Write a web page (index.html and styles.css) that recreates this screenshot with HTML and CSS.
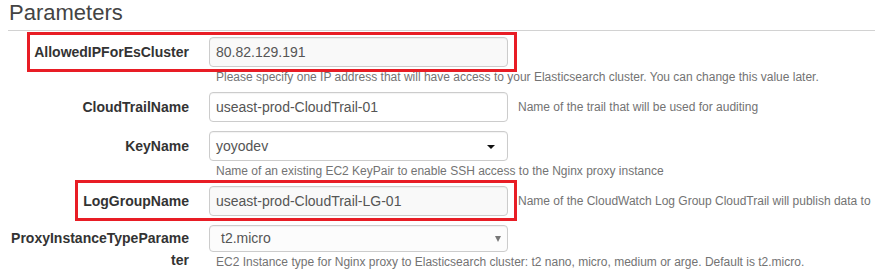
FILE: index.html
```html
<!DOCTYPE html>
<html lang="en">
<head>
    <meta charset="UTF-8">
    <meta name="viewport" content="width=device-width, initial-scale=1.0">
    <title>Parameters</title>
    <link rel="stylesheet" href="styles.css">
</head>
<body>
<div id="page">
    <h2 class="title">Parameters</h2>

    <div class="field">
        <label class="field-label">AllowedIPForEsCluster</label>
        <div class="field-control">
            <input class="text-input shaded" type="text" value="80.82.129.191">
            <div class="help">Please specify one IP address that will have access to your Elasticsearch cluster. You can change this value later.</div>
        </div>
        <div class="highlight box-ip"></div>
    </div>

    <div class="field">
        <label class="field-label">CloudTrailName</label>
        <div class="field-control inline">
            <input class="text-input" type="text" value="useast-prod-CloudTrail-01">
            <div class="help-inline">Name of the trail that will be used for auditing</div>
        </div>
    </div>

    <div class="field">
        <label class="field-label">KeyName</label>
        <div class="field-control">
            <div class="select dark-caret">yoyodev</div>
            <div class="help">Name of an existing EC2 KeyPair to enable SSH access to the Nginx proxy instance</div>
        </div>
    </div>

    <div class="field">
        <label class="field-label">LogGroupName</label>
        <div class="field-control inline">
            <input class="text-input shaded" type="text" value="useast-prod-CloudTrail-LG-01">
            <div class="help-inline">Name of the CloudWatch Log Group CloudTrail will publish data to</div>
        </div>
        <div class="highlight box-log"></div>
    </div>

    <div class="field">
        <label class="field-label wrap">ProxyInstanceTypeParameter</label>
        <div class="field-control">
            <div class="select grey-caret short">t2.micro</div>
            <div class="help">EC2 Instance type for Nginx proxy to Elasticsearch cluster: t2 nano, micro, medium or arge. Default is t2.micro.</div>
        </div>
    </div>
</div>
</body>
</html>
```
FILE: styles.css
```css
body {
    margin: 0;
    padding: 0;
    background-color: #fff;
    font-family: "Liberation Sans", Arial, sans-serif;
    color: #333;
    overflow: hidden;
}

#page {
    padding-left: 8px;
}

.title {
    margin: 0;
    padding: 0 0 5px 1px;
    font-size: 22px;
    font-weight: normal;
    line-height: 25px;
    color: #444;
    border-bottom: 1px solid #d2d2d2;
}

.field {
    position: relative;
    display: flex;
    align-items: flex-start;
    margin-bottom: 9px;
}

.field:first-of-type {
    margin-top: 6px;
}

.field-label {
    width: 181px;
    flex-shrink: 0;
    padding-top: 4px;
    text-align: right;
    font-size: 14px;
    font-weight: bold;
    line-height: 22px;
    color: #333;
}

.field-label.wrap {
    word-break: break-all;
    padding-top: 2px;
}

.field-control {
    margin-left: 20px;
}

.field-control.inline {
    display: flex;
    align-items: center;
}

.text-input,
.select {
    box-sizing: border-box;
    width: 299px;
    height: 30px;
    padding: 0 6px;
    border: 1px solid #ccc;
    border-radius: 4px;
    background-color: #fff;
    font-family: "Liberation Sans", Arial, sans-serif;
    font-size: 14px;
    color: #555;
    box-shadow: inset 0 1px 1px rgba(0, 0, 0, 0.05);
}

.text-input.shaded {
    background-color: #f9f9f9;
}

.select {
    position: relative;
    line-height: 28px;
}

.select.short {
    height: 27px;
    line-height: 25px;
    padding-left: 11px;
    background-color: #fcfcfc;
}

.dark-caret::after {
    content: "";
    position: absolute;
    right: 12px;
    top: 13px;
    border-left: 4px solid transparent;
    border-right: 4px solid transparent;
    border-top: 4px solid #111;
}

.grey-caret::after {
    content: "";
    position: absolute;
    right: 6px;
    top: 10px;
    border-left: 3.5px solid transparent;
    border-right: 3.5px solid transparent;
    border-top: 6px solid #777;
}

.help {
    margin: 4px 0 0 7px;
    font-size: 12px;
    line-height: 12px;
    color: #737373;
    white-space: nowrap;
}

.help-inline {
    margin-left: 10px;
    font-size: 12px;
    color: #737373;
    white-space: nowrap;
}

.highlight {
    position: absolute;
    box-sizing: border-box;
    border: 3px solid #e81d25;
    pointer-events: none;
}

.box-ip {
    left: 19px;
    top: -5px;
    width: 490px;
    height: 40px;
}

.box-log {
    left: 67px;
    top: -6px;
    width: 442px;
    height: 41px;
}
```
